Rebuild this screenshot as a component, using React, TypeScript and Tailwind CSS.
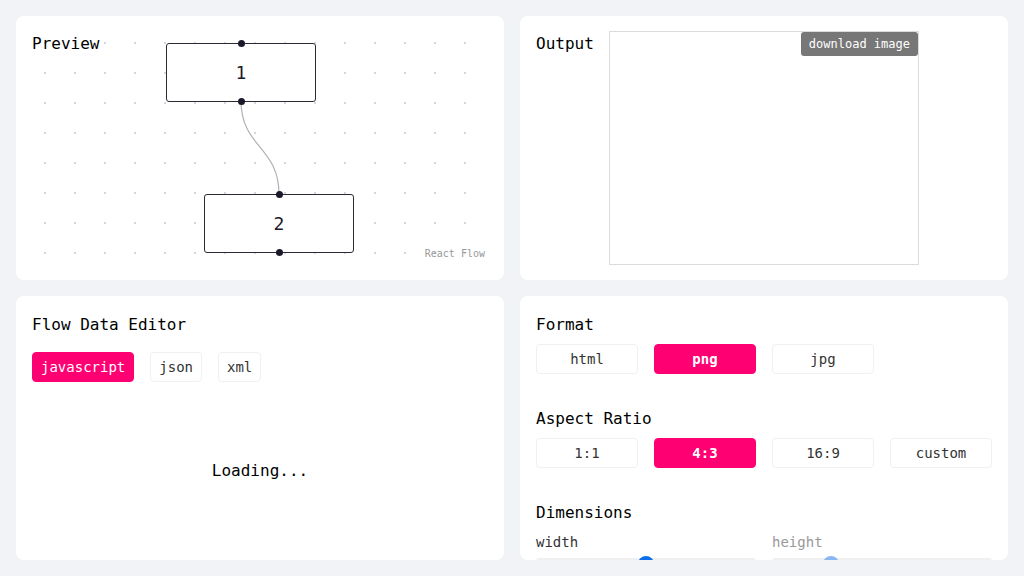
import React, { useState } from 'react';

const PINK = 'bg-[#ff0072] border-[#ff0072] text-white';
const PLAIN = 'bg-white border-[#f0f0f0] text-[#333]';

const FlowNode: React.FC<{ label: string; x: number; y: number }> = ({ label, x, y }) => (
    <div
        className="absolute w-[150px] h-[59px] rounded-[3px] border-[1.5px] border-[#2b2a33] bg-white flex items-center justify-center text-[18px] text-[#1a192b]"
        style={{ left: x, top: y }}
    >
        {label}
        <span className="absolute left-1/2 -top-[4px] -ml-[3.5px] w-[7px] h-[7px] rounded-full bg-[#1a192b]" />
        <span className="absolute left-1/2 -bottom-[4px] -ml-[3.5px] w-[7px] h-[7px] rounded-full bg-[#1a192b]" />
    </div>
);

const PreviewCard: React.FC = () => (
    <div className="bg-white rounded-lg p-4 h-[264px]">
        <div className="relative w-full h-full">
            <svg className="absolute inset-0" width="456" height="232">
                <defs>
                    <pattern id="dots" x="-2" y="-4" width="30" height="30" patternUnits="userSpaceOnUse">
                        <circle cx="15" cy="15" r="0.9" fill="#c4c4c8" />
                    </pattern>
                </defs>
                <rect width="456" height="232" fill="url(#dots)" />
                <path d="M209,69 C209,115 247,115 247,162" fill="none" stroke="#b1b1b7" strokeWidth="1.2" />
            </svg>
            <div className="absolute left-0 top-0 text-base leading-6 text-black">Preview</div>
            <FlowNode label="1" x={134} y={11} />
            <FlowNode label="2" x={172} y={162} />
            <div className="absolute right-0 bottom-[2px] px-[3px] text-[10px] leading-4 text-[#999]">React Flow</div>
        </div>
    </div>
);

const OutputCard: React.FC = () => (
    <div className="bg-white rounded-lg h-[264px] px-4 py-[15px] grid grid-cols-[1fr_auto_1fr]">
        <div className="text-base leading-6 text-black pt-px">Output</div>
        <div className="relative w-[310px] h-[234px] border border-[#dcdcdc] bg-white">
            <div className="absolute top-0 right-0 h-[24px] px-2 flex items-center rounded-[3px] bg-[#777] text-white text-[12px]">
                download image
            </div>
        </div>
        <div />
    </div>
);

const EditorCard: React.FC = () => {
    const [lang, setLang] = useState('javascript');
    return (
        <div className="bg-white rounded-lg h-[264px] p-4 flex flex-col">
            <div className="text-base leading-6 text-black pt-px">Flow Data Editor</div>
            <div className="mt-[15px] flex gap-4">
                {['javascript', 'json', 'xml'].map(l => (
                    <button
                        key={l}
                        onClick={() => setLang(l)}
                        className={`px-2 py-1 text-sm leading-5 rounded border ${lang === l ? PINK : PLAIN}`}
                    >
                        {l}
                    </button>
                ))}
            </div>
            <div className="mt-4 flex-1 flex items-center justify-center text-base text-black">Loading...</div>
        </div>
    );
};

const OptionRow: React.FC<{ items: string[]; active: string; onPick: (v: string) => void }> = ({ items, active, onPick }) => (
    <div className="mt-[7px] flex gap-4">
        {items.map(i => (
            <button
                key={i}
                onClick={() => onPick(i)}
                className={`w-[102px] h-[30px] text-sm rounded border ${active === i ? PINK + ' font-bold' : PLAIN}`}
            >
                {i}
            </button>
        ))}
    </div>
);

const Slider: React.FC<{ label: string; value: number; disabled?: boolean }> = ({ label, value, disabled }) => (
    <div className={`flex flex-col text-sm leading-5 ${disabled ? 'text-[#999]' : 'text-[#333]'}`}>
        {label}
        <div className="relative mt-1 h-4">
            <div className="absolute left-0 right-0 top-[2px] h-[6px] rounded-full bg-[#efefef]" />
            <div
                className={`absolute top-0 w-4 h-4 rounded-full ${disabled ? 'bg-[#8ab6f3]' : 'bg-[#0a6fe8]'}`}
                style={{ left: `calc(${value}% - ${value * 0.16}px)` }}
            />
        </div>
    </div>
);

const SettingsCard: React.FC = () => {
    const [format, setFormat] = useState('png');
    const [ratio, setRatio] = useState('4:3');
    return (
        <div className="bg-white rounded-lg h-[264px] p-4 overflow-hidden">
            <div className="text-base leading-6 text-black pt-px">Format</div>
            <OptionRow items={['html', 'png', 'jpg']} active={format} onPick={setFormat} />
            <div className="mt-8 text-base leading-6 text-black pt-px">Aspect Ratio</div>
            <OptionRow items={['1:1', '4:3', '16:9', 'custom']} active={ratio} onPick={setRatio} />
            <div className="mt-8 text-base leading-6 text-black pt-px">Dimensions</div>
            <div className="mt-[7px] grid grid-cols-2 gap-4">
                <Slider label="width" value={50} />
                <Slider label="height" value={25} disabled />
            </div>
        </div>
    );
};

export default function App() {
    return (
        <div className="min-h-screen bg-[#f1f3f6] p-4 font-['DejaVu_Sans_Mono',monospace]">
            <div className="grid grid-cols-2 gap-4">
                <PreviewCard />
                <OutputCard />
                <EditorCard />
                <SettingsCard />
            </div>
        </div>
    );
}
